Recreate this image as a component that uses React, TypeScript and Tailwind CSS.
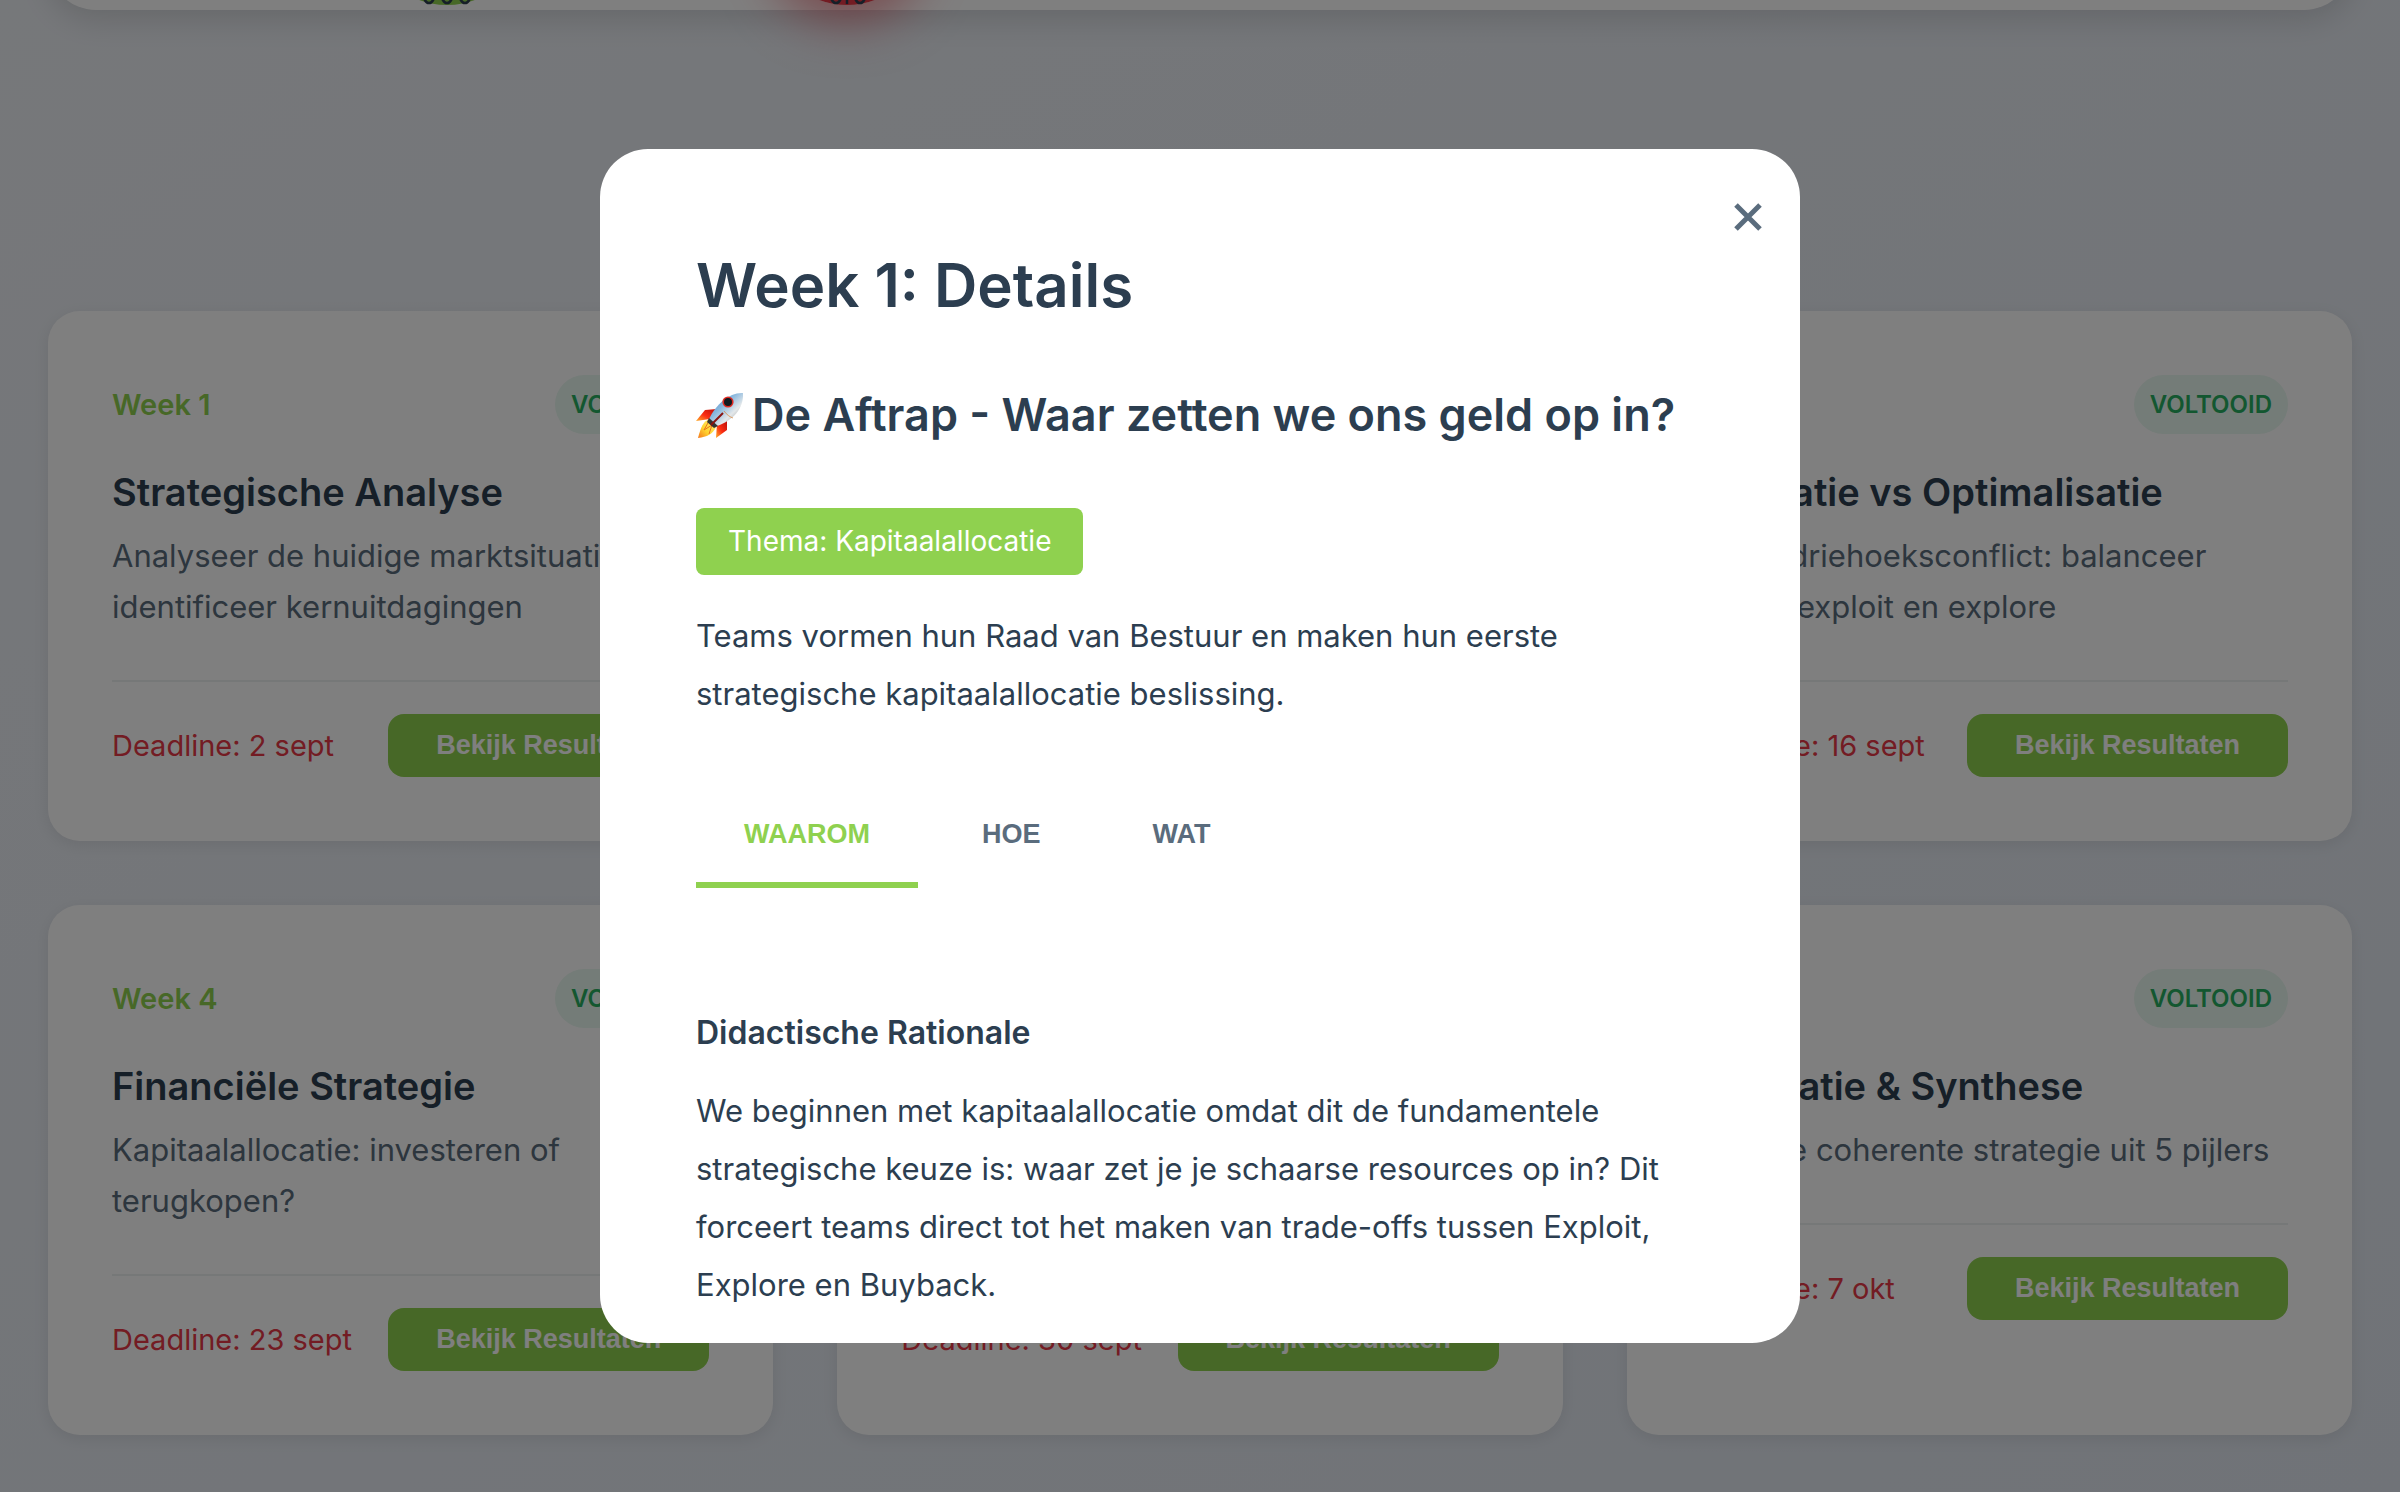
import { useState } from "react";

type Week = {
  week: number;
  title: string;
  description: string;
  deadline: string;
};

const weeks: Week[] = [
  { week: 1, title: "Strategische Analyse", description: "Analyseer de huidige marktsituatie en identificeer kernuitdagingen", deadline: "2 sept" },
  { week: 2, title: "Strategische Keuzes", description: "Formuleer keuzes en onderbouw de gekozen richting", deadline: "9 sept" },
  { week: 3, title: "Innovatie vs Optimalisatie", description: "In een driehoeksconflict: balanceer tussen exploit en explore", deadline: "16 sept" },
  { week: 4, title: "Financiële Strategie", description: "Kapitaalallocatie: investeren of terugkopen?", deadline: "23 sept" },
  { week: 5, title: "Implementatie", description: "Vertaal de strategie naar een concreet plan van aanpak", deadline: "30 sept" },
  { week: 6, title: "Integratie & Synthese", description: "Geef de coherente strategie uit 5 pijlers", deadline: "7 okt" },
];

const tabs = ["WAAROM", "HOE", "WAT"];

function WeekCard({ item }: { item: Week }) {
  return (
    <article className="rounded-[32px] bg-white p-16 shadow-[0_4px_16px_rgba(0,0,0,0.08)]">
      <div className="flex items-center justify-between">
        <span className="text-[29px] font-semibold leading-[45px] text-[#8fd14f]">Week {item.week}</span>
        <span className="rounded-[32px] bg-[#e8f8f0] px-4 py-2 text-[24px] font-semibold leading-[43px] text-[#27ae60]">VOLTOOID</span>
      </div>
      <h3 className="mt-8 text-[38px] font-semibold leading-[52px] text-[#2c3e50]">{item.title}</h3>
      <p className="mt-3 text-[31px] leading-[51px] text-[#5a6c7d]">{item.description}</p>
      <div className="mt-12 flex items-center justify-between border-t-2 border-[#ecf0f1] pt-8">
        <span className="text-[29px] text-[#e63946]">Deadline: {item.deadline}</span>
        <button type="button" className="rounded-2xl bg-[#8fd14f] px-12 py-4 font-['Liberation_Sans',sans-serif] text-[27px] font-bold leading-[31px] text-white">
          Bekijk Resultaten
        </button>
      </div>
    </article>
  );
}

function RocketIcon() {
  return (
    <svg viewBox="0 0 48 48" className="size-12 shrink-0" aria-hidden="true">
      <defs>
        <linearGradient id="hull" x1="0" y1="0" x2="1" y2="1">
          <stop offset="0" stopColor="#3f7fc0" />
          <stop offset="0.4" stopColor="#8ab8de" />
          <stop offset="0.65" stopColor="#e4e8ea" />
          <stop offset="1" stopColor="#77797b" />
        </linearGradient>
        <linearGradient id="fin" x1="1" y1="0" x2="0" y2="1">
          <stop offset="0" stopColor="#b80d08" />
          <stop offset="0.55" stopColor="#fb2c12" />
          <stop offset="1" stopColor="#ffb02a" />
        </linearGradient>
        <linearGradient id="flame" x1="1" y1="0" x2="0" y2="1">
          <stop offset="0" stopColor="#fff27a" />
          <stop offset="0.6" stopColor="#ffd22e" />
          <stop offset="1" stopColor="#f4761c" />
        </linearGradient>
      </defs>
      <path d="M21 18 9 19 0 30l14-2Z" fill="url(#fin)" />
      <path d="M31 29v10L20 47l1-14Z" fill="url(#fin)" />
      <path d="M14 28C7 30 5 36 2 47c9-1 15-4 18-11Z" fill="url(#flame)" />
      <path d="M13 30 8 39l8-5-3 9" fill="none" stroke="#e8731a" strokeWidth="1" />
      <path d="M47 2C34 1 20 13 13 28l8 7C36 30 48 18 47 2Z" fill="url(#hull)" />
      <path d="M28 20c3 4 6 6 9 7" fill="none" stroke="#d98a45" strokeWidth="0.8" />
      <path d="m13 27 9 8-4 2-7-6Z" fill="#333" />
      <path d="M27 22 15 34" stroke="#8a1410" strokeWidth="2" />
      <circle cx="32" cy="11" r="5.6" fill="#e02a22" />
      <circle cx="32" cy="11" r="4" fill="#10191f" />
    </svg>
  );
}

function HeaderPanel() {
  return (
    <header className="-mt-[190px] flex h-[200px] items-end rounded-[48px] bg-white shadow-[0_8px_32px_rgba(0,0,0,0.14)]">
      <div className="mb-[5px] ml-[319px] flex gap-60">
        <svg className="size-[160px] overflow-visible rounded-full" viewBox="0 0 160 160" aria-hidden="true">
          <circle cx="80" cy="80" r="80" fill="#8fd14f" />
          <g fill="none" stroke="#2c3e50" strokeWidth="2.5">
            <ellipse cx="62" cy="147" rx="6" ry="11" />
            <ellipse cx="80" cy="147" rx="6" ry="11" />
            <ellipse cx="98" cy="147" rx="6" ry="11" />
          </g>
        </svg>
        <svg className="size-[160px] overflow-visible rounded-full shadow-[0_16px_50px_rgba(230,57,70,0.55)]" viewBox="0 0 160 160" aria-hidden="true">
          <circle cx="80" cy="80" r="80" fill="#e63946" />
          <g fill="none" stroke="#2c3e50" strokeWidth="2.5">
            <ellipse cx="69" cy="147" rx="6" ry="11" />
            <path d="M80 140v19" />
            <ellipse cx="93" cy="147" rx="6" ry="11" />
          </g>
        </svg>
      </div>
    </header>
  );
}

function DetailsDialog({ onClose }: { onClose: () => void }) {
  const [active, setActive] = useState("WAAROM");
  return (
    <div className="fixed inset-0 flex items-center justify-center bg-black/50">
      <div role="dialog" aria-modal="true" aria-labelledby="dialog-title" className="relative h-[80vh] w-1/2 overflow-hidden rounded-[48px] bg-white px-24 pt-24 text-[#2c3e50]">
        <button type="button" aria-label="Sluiten" onClick={onClose} className="absolute right-8 top-12 flex size-10 items-center justify-center text-[#5a6c7d]">
          <svg viewBox="0 0 28 28" className="size-7" aria-hidden="true">
            <path d="m2 2 24 24M26 2 2 26" stroke="currentColor" strokeWidth="5" />
          </svg>
        </button>
        <h1 id="dialog-title" className="text-[60px] font-semibold leading-[80px]">Week 1: Details</h1>
        <h2 className="mt-12 flex items-center gap-2 whitespace-nowrap text-[45px] font-semibold leading-[83px]">
          <RocketIcon />
          De Aftrap - Waar zetten we ons geld op in?
        </h2>
        <span className="mt-13 inline-block rounded-lg bg-[#8fd14f] px-8 py-2 text-[28px] leading-[51px] text-white">Thema: Kapitaalallocatie</span>
        <p className="mt-8 text-[31px] leading-[58px]">Teams vormen hun Raad van Bestuur en maken hun eerste strategische kapitaalallocatie beslissing.</p>
        <div role="tablist" className="mt-16 flex gap-4">
          {tabs.map((tab) => (
            <button
              key={tab}
              type="button"
              role="tab"
              aria-selected={tab === active}
              onClick={() => setActive(tab)}
              className={
                "border-b-6 px-12 py-8 font-['Liberation_Sans',sans-serif] text-[27px] font-bold leading-[31px] " +
                (tab === active ? "border-[#8fd14f] text-[#8fd14f]" : "border-transparent text-[#5a6c7d]")
              }
            >
              {tab}
            </button>
          ))}
        </div>
        <section role="tabpanel" className="mt-29">
          <h4 className="text-[32px] font-semibold leading-[58px]">Didactische Rationale</h4>
          <p className="mt-5 text-[31px] leading-[58px]">
            We beginnen met kapitaalallocatie omdat dit de fundamentele strategische keuze is: waar zet je je schaarse resources op in? Dit forceert teams direct tot het maken van trade-offs tussen Exploit, Explore en Buyback.
          </p>
        </section>
      </div>
    </div>
  );
}

export default function App() {
  const [open, setOpen] = useState(true);
  return (
    <div className="flow-root min-h-screen overflow-hidden bg-linear-to-br from-[#edf0f5] to-[#e1e7f0] px-12 pb-14 font-[Inter,sans-serif]">
      <HeaderPanel />
      <main className="mt-[301px] grid grid-cols-3 items-stretch gap-16">
        {weeks.map((item) => (
          <WeekCard key={item.week} item={item} />
        ))}
      </main>
      {open && <DetailsDialog onClose={() => setOpen(false)} />}
    </div>
  );
}
